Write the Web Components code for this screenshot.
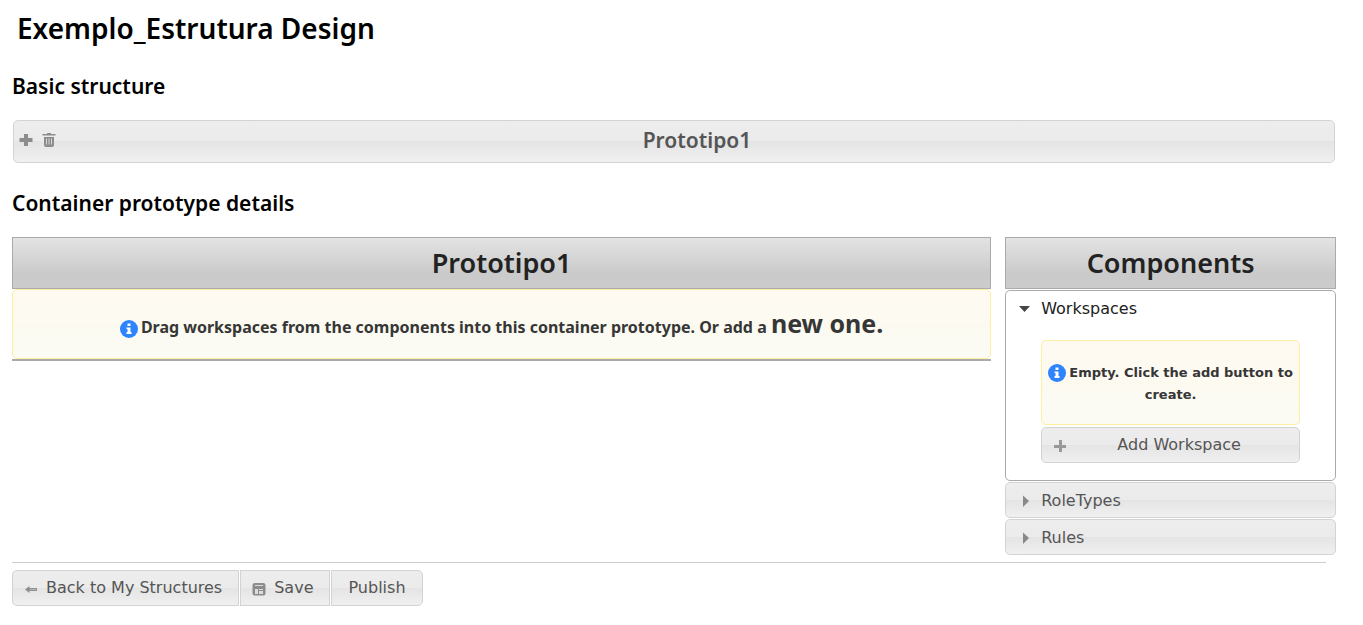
<!DOCTYPE html>
<html lang="en">
<head>
<meta charset="utf-8">
<meta name="viewport" content="width=device-width, initial-scale=1">
<title>Exemplo_Estrutura Design</title>
<style>
body {
  margin: 0;
  background: #fff;
  color: #000;
  font: 16px/22px "DejaVu Sans", Verdana, sans-serif;
  --heading-font: "Noto Sans", "Trebuchet MS", sans-serif;
  --glass: linear-gradient(#ededed 0, #ebebeb 49%, #e4e4e4 50%, #f0f0f0 100%);
  --bar: linear-gradient(#e3e3e3 0, #cacaca 72%, #cccccc 100%);
  --note: linear-gradient(#fefaf2 0, #fdfaf1 49%, #fcfaef 50%, #fbfbf4 75%, #fbfbf4 100%);
}
</style>
</head>
<body>
<structure-designer></structure-designer>

<script>
const define = (name, html, setup) => {
  const template = document.createElement('template');
  template.innerHTML = html;
  customElements.define(name, class extends HTMLElement {
    constructor() {
      super();
      this.attachShadow({ mode: 'open' }).append(template.content.cloneNode(true));
    }
    connectedCallback() {
      if (setup) setup(this, this.shadowRoot);
    }
  });
};

const ICONS = {
  plus: '<path fill="#8c8c8c" d="M6 2h4v4h4.500v4H10v4H6v-4H1.500V6H6z"/>',
  plusthin: '<path fill="#999" d="M7 2h3v5h4v3h-4v4H7v-4H2V7h5z"/>',
  trash: '<path fill="#8c8c8c" d="M6 1h4v1h4.500v1.500h-13V2H6zM3 5h10v8q0 2-2 2H5q-2 0-2-2z"/><path fill="#d6d6d6" d="M5 6.500h1v6H5zm2.500 0h1v6h-1zM10 6.500h1v6h-1z"/>',
  back: '<path fill="#8f8f8f" d="M2 8.500L6.500 5v2H14v3H6.500v2z"/><path fill="#b8b8b8" d="M7 8h6v1H7z"/>',
  disk: '<path fill="#8c8c8c" d="M4 2h8q2.500 0 2.500 2v8q0 2.500-2.500 2.500H4q-2.500 0-2.500-2.500V4q0-2 2.500-2z"/><path fill="#dcdcdc" d="M4 4h8v1H4zM4 8h3v5H4zM8 8h4v1H8zM8 10h4v3H8z"/>',
  down: '<path fill="#454545" d="M2 5h11L7.500 11z"/>',
  right: '<path fill="#888" d="M6 2.500L12 8 6 14z"/>'
};

define('ui-icon', `
<style>
:host { display: block; flex: none; width: 16px; height: 16px; }
svg { display: block; width: 16px; height: 16px; }
</style>
<svg viewBox="0 0 16 16" aria-hidden="true"></svg>`,
(host, root) => { root.querySelector('svg').innerHTML = ICONS[host.getAttribute('name')] || ''; });

define('info-icon', `
<style>
:host { display: inline-block; width: 18px; height: 18px; margin-right: 3px; vertical-align: -5px; }
svg { display: block; }
</style>
<svg width="18" height="18" viewBox="0 0 18 18" aria-hidden="true">
  <circle cx="9" cy="9" r="9" fill="#2e83ff"/>
  <path fill="#fff" d="M7.500 3.500h3V6h-3zM6.500 7.500h4V12h1v2h-5v-2h1V9h-1z"/>
</svg>`);

define('prototype-bar', `
<style>
:host { display: flex; align-items: center; box-sizing: border-box; height: 43px; margin: 0 1px;
  padding: 0 0 3px 4px; border: 1px solid #d3d3d3; border-radius: 5px; background: var(--glass); }
.tools { display: flex; gap: 7px; width: 42px; }
button { display: block; width: 16px; height: 16px; padding: 0; border: 0; background: none; cursor: pointer; }
.name { flex: 1; text-align: center; font: 600 21px/28px var(--heading-font); color: #555; }
</style>
<div class="tools">
  <button type="button" aria-label="Add"><ui-icon name="plus"></ui-icon></button>
  <button type="button" aria-label="Delete"><ui-icon name="trash"></ui-icon></button>
</div>
<div class="name"><slot></slot></div>`);

define('panel-title', `
<style>
:host { display: block; border: 1px solid #aaa; background: var(--bar); }
h2 { margin: 0; font: 600 27px/50px var(--heading-font); color: #222; text-align: center; }
</style>
<h2><slot></slot></h2>`);

define('info-note', `
<style>
:host { display: block; border: 1px solid #fcefa1; border-radius: 5px; background: var(--note); color: #363636; }
p { margin: 0; text-align: center; }
:host([size="large"]) p { padding: 15px 8px 13px; font: 700 16px/36px var(--heading-font); }
:host([size="small"]) p { padding: 21px 6px 18px; font-weight: 700; font-size: 13px; line-height: 22px; }
</style>
<p><info-icon></info-icon><slot></slot></p>`);

define('ui-button', `
<style>
:host { display: block; }
button { position: relative; box-sizing: border-box; display: block; width: 100%; height: 36px; padding: 0 16px;
  border: 1px solid #d3d3d3; border-radius: var(--radius, 5px); background: var(--glass);
  color: #555; font: inherit; line-height: 34px; white-space: nowrap; cursor: pointer; }
:host([icon]) button { padding-left: 33px; }
ui-icon { position: absolute; left: 10px; top: 10px; }
</style>
<button type="button"><slot></slot></button>`,
(host, root) => {
  const name = host.getAttribute('icon');
  if (!name) return;
  const icon = document.createElement('ui-icon');
  icon.setAttribute('name', name);
  root.querySelector('button').prepend(icon);
});

define('accordion-section', `
<style>
:host { display: block; border: 1px solid #d3d3d3; border-radius: 5px; background: var(--glass); color: #555; }
:host([open]) { border-color: #aaa; background: #fff; color: #212121; }
h3 { margin: 0; font: inherit; }
button { display: flex; align-items: center; gap: 8px; width: 100%; height: 34px; padding: 1px 11px 0; border: 0;
  background: none; color: inherit; font: inherit; text-align: left; cursor: pointer; }
.body { padding: 15px 35px 17px; }
:host(:not([open])) .body { display: none; }
</style>
<h3><button type="button"><span></span></button></h3>
<div class="body"><slot></slot></div>`,
(host, root) => {
  const open = host.hasAttribute('open');
  const button = root.querySelector('button');
  root.querySelector('span').textContent = host.getAttribute('label');
  button.setAttribute('aria-expanded', open);
  const icon = document.createElement('ui-icon');
  icon.setAttribute('name', open ? 'down' : 'right');
  button.prepend(icon);
});

define('structure-designer', `
<style>
:host { display: block; padding: 10px 27px 19px 12px; }
h1 { margin: 0 0 26px; padding-left: 5px; font: 600 28px/36px var(--heading-font); }
h2 { margin: 0 0 20px; font: 600 21px/28px var(--heading-font); }
prototype-bar { margin-bottom: 26px; }
.columns { display: grid; grid-template-columns: 74fr 25fr; gap: 14px; align-items: start; }
.prototype { border-bottom: 2px solid #aaa; }
.accordion { display: grid; gap: 1px; margin-top: 1px; }
.stack { display: grid; gap: 2px; }
a { color: inherit; text-decoration: none; font-size: 25px; }
.actions { display: flex; gap: 1px; padding-top: 7px; }
hr { margin: 7px 10px 0 0; border: 0; border-top: 1px solid #ccc; }
.first { --radius: 5px 0 0 5px; }
.middle { --radius: 0; }
.last { --radius: 0 5px 5px 0; }
</style>
<h1>Exemplo_Estrutura Design</h1>
<h2>Basic structure</h2>
<prototype-bar>Prototipo1</prototype-bar>
<h2>Container prototype details</h2>
<div class="columns">
  <section class="prototype">
    <panel-title>Prototipo1</panel-title>
    <info-note size="large">Drag workspaces from the components into this container prototype. Or add a <a href="#new">new one.</a></info-note>
  </section>
  <aside>
    <panel-title>Components</panel-title>
    <div class="accordion">
      <accordion-section label="Workspaces" open>
        <div class="stack">
          <info-note size="small">Empty. Click the add button to create.</info-note>
          <ui-button icon="plusthin">Add Workspace</ui-button>
        </div>
      </accordion-section>
      <accordion-section label="RoleTypes"></accordion-section>
      <accordion-section label="Rules"></accordion-section>
    </div>
  </aside>
</div>
<hr>
<div class="actions">
  <ui-button class="first" icon="back">Back to My Structures</ui-button>
  <ui-button class="middle" icon="disk">Save</ui-button>
  <ui-button class="last">Publish</ui-button>
</div>`);
</script>
</body>
</html>
